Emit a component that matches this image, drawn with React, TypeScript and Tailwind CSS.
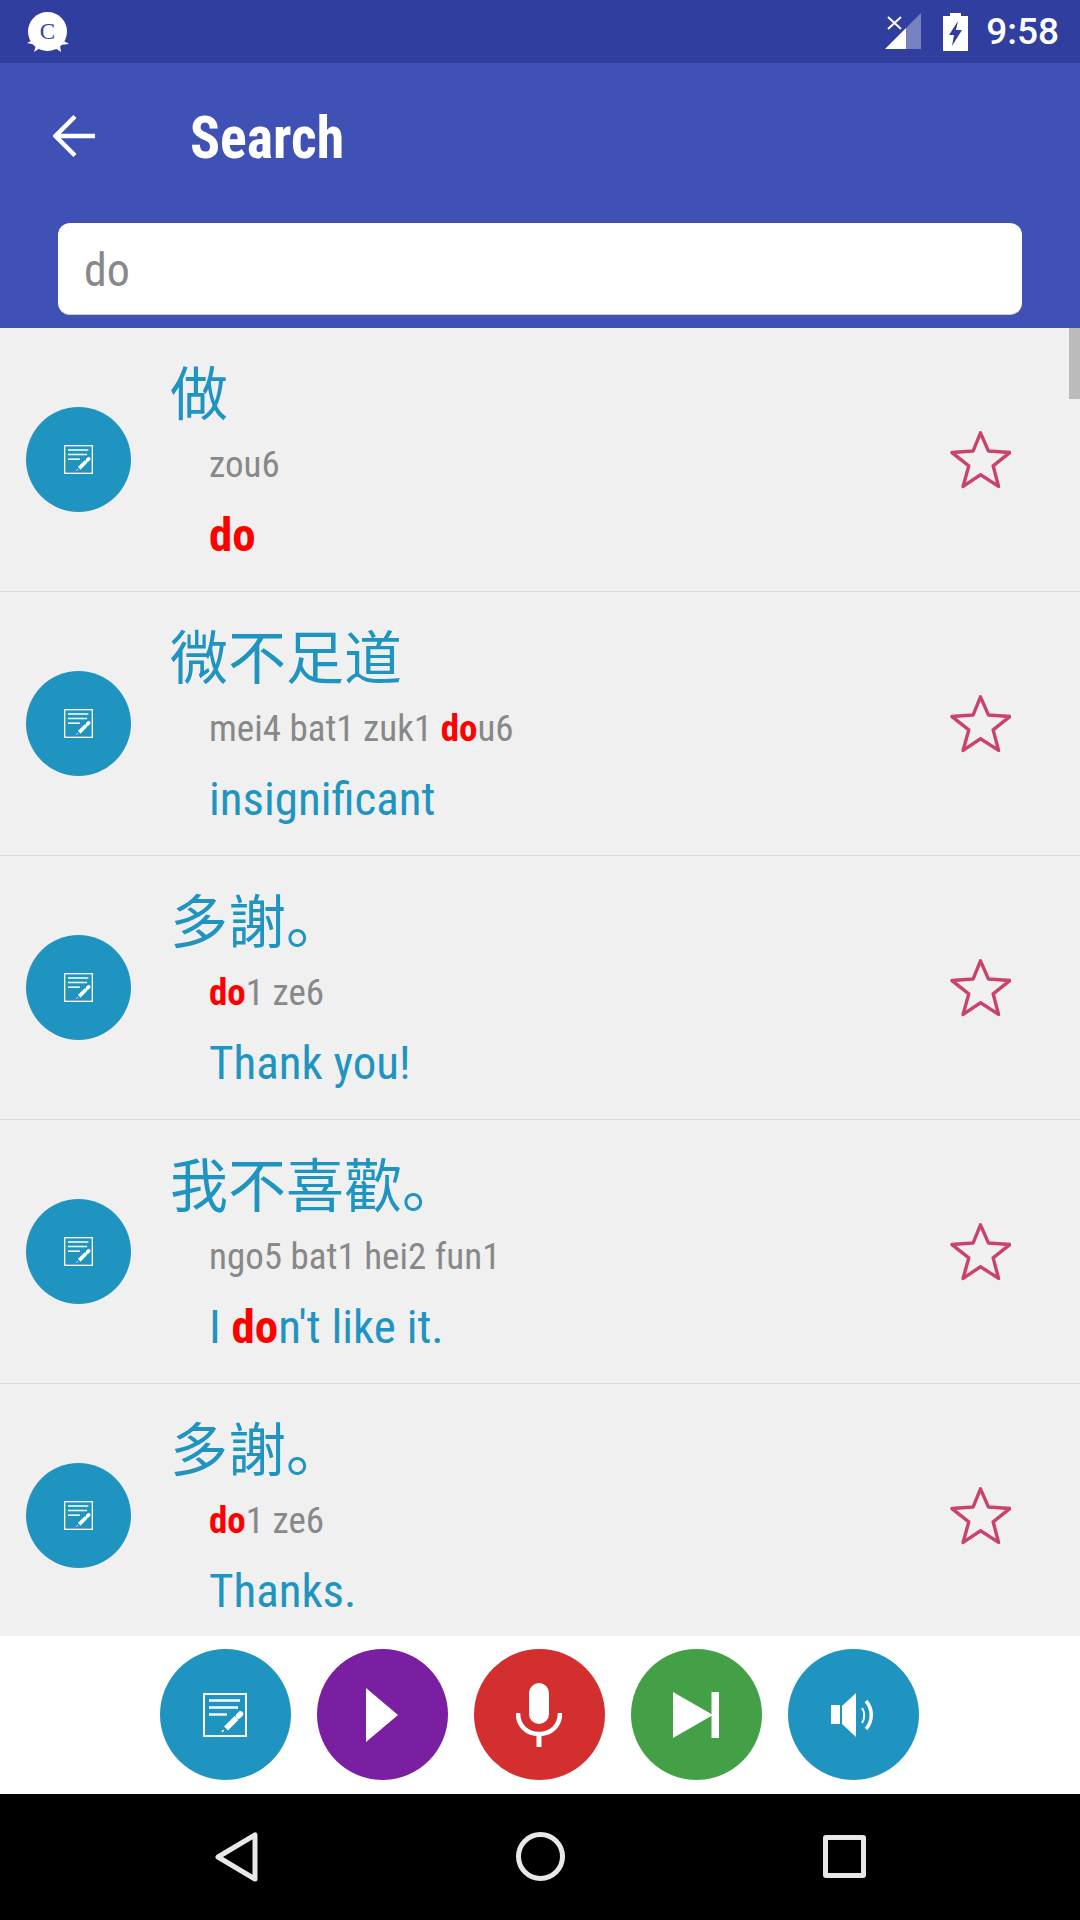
import React from "react";

const NoteIcon = ({ size }: { size: number }) => (
  <svg width={size} height={size} viewBox="0 0 44 44" fill="none">
    <rect x="1" y="1" width="42" height="42" stroke="#fff" strokeWidth="2" />
    <path d="M6 7.5H37M6 14.5H35" stroke="#fff" strokeWidth="2.4" />
    <path d="M6 21.5H24" stroke="#fff" strokeWidth="2.4" />
    <path d="M23 35.5L33.5 25" stroke="#fff" strokeWidth="5.5" />
    <path d="M35.5 23L37.5 21" stroke="#fff" strokeWidth="5.5" strokeLinecap="round" />
    <path d="M19 39L20.5 37" stroke="#fff" strokeWidth="1.4" />
  </svg>
);

const Star = () => (
  <svg width="61" height="59" viewBox="0 0 64 62" fill="none">
    <path
      d="M32 3L40.3 22L62.7 23.7L45.3 37.7L51 59.3L32 47L13.7 59.3L19.7 37.7L2 23.7L24.3 22Z"
      stroke="#c9446c"
      strokeWidth="3.6"
      strokeLinejoin="round"
    />
  </svg>
);

const R = ({ children }: { children: React.ReactNode }) => (
  <span className="font-bold text-[#ff0000]">{children}</span>
);

const rows: { zh: string; py: React.ReactNode; en: React.ReactNode }[] = [
  { zh: "做", py: "zou6", en: <R>do</R> },
  { zh: "微不足道", py: <>mei4 bat1 zuk1 <R>do</R>u6</>, en: "insignificant" },
  { zh: "多謝。", py: <><R>do</R>1 ze6</>, en: "Thank you!" },
  { zh: "我不喜歡。", py: "ngo5 bat1 hei2 fun1", en: <>I <R>do</R>n't like it.</> },
  { zh: "多謝。", py: <><R>do</R>1 ze6</>, en: "Thanks." },
];

const Row = ({ zh, py, en }: (typeof rows)[number]) => (
  <div className="flex h-[264px] shrink-0 items-center border-b border-[#d8d8d8] pl-[26px] pr-[69px]">
    <div className="flex h-[105px] w-[105px] shrink-0 items-center justify-center rounded-full bg-[#2094c0]">
      <NoteIcon size={29} />
    </div>
    <div className="ml-[39px] flex h-full min-w-0 flex-1 flex-col">
      <div className="mt-[27px] h-[70px] text-[58px] leading-[70px] text-[#2094c0] [font-family:'Noto_Sans_CJK_SC',sans-serif]">
        {zh}
      </div>
      <div className="ml-[39px] mt-[18px] h-[44px] text-[37px] font-[450] leading-[44px] text-[#888888] [font-stretch:75%]">
        {py}
      </div>
      <div className="ml-[39px] mt-[20px] h-[56px] text-[47px] font-[450] leading-[56px] text-[#2094c0] [font-stretch:75%]">
        {en}
      </div>
    </div>
    <Star />
  </div>
);

export default function App() {
  return (
    <div className="flex h-[1920px] w-[1080px] flex-col overflow-hidden bg-white [font-family:Roboto,sans-serif]">
      <div className="flex h-[63px] shrink-0 items-center justify-between bg-[#303f9f] pl-[27px] pr-[21px]">
        <svg width="42" height="40" viewBox="0 0 42 40">
          <circle cx="20.5" cy="19.5" r="19.5" fill="#fff" />
          <path d="M0 31L9 33L7 40L13 36H28L34 40L33 33L42 32L32 26H10Z" fill="#fff" />
          <text x="20.5" y="27" textAnchor="middle" fontSize="23" fill="#303f9f" fontFamily="Liberation Serif, serif">C</text>
        </svg>
        <div className="flex items-center">
          <svg width="36" height="37" viewBox="0 0 36 37">
            <path d="M36 0V36H21V15Z" fill="#fff" fillOpacity=".35" />
            <path d="M21 15V36H0Z" fill="#fff" />
            <path d="M3 4L16 16M16 4L3 16" stroke="#fff" strokeWidth="2" />
          </svg>
          <svg className="ml-[22px]" width="25" height="38" viewBox="0 0 25 38">
            <path d="M7 0H18V3H25V38H0V3H7Z" fill="#fff" />
            <path d="M15 8L6 22H11L9 33L19 17H13Z" fill="#303f9f" />
          </svg>
          <span className="ml-[18px] text-[37px] font-medium leading-[42px] text-white">9:58</span>
        </div>
      </div>

      <div className="flex h-[265px] shrink-0 flex-col bg-[#3f51b5]">
        <div className="flex h-[146px] items-center pl-[53px]">
          <svg width="42" height="42" viewBox="0 0 42 42" fill="none">
            <path d="M42 21H4M22 1.5L2.5 21L22 40.5" stroke="#fff" strokeWidth="4.5" />
          </svg>
          <span className="ml-[95px] mt-[4px] origin-left scale-x-[0.93] text-[60px] font-bold leading-[64px] text-white [font-stretch:75%]">Search</span>
        </div>
        <div className="mx-[58px] mt-[14px] flex h-[92px] items-center rounded-[12px] border-b border-[#cccccc] bg-white pl-[26px] pt-[4px] text-[46px] font-[450] text-[#888888] [font-stretch:75%]">
          do
        </div>
      </div>

      <div className="relative flex h-[1308px] shrink-0 flex-col overflow-hidden bg-[#f0f0f0]">
        {rows.map((r, i) => (
          <Row key={i} {...r} />
        ))}
        <div className="absolute right-0 top-0 h-[71px] w-[11px] bg-[#bbbbbb]" />
      </div>

      <div className="flex h-[158px] shrink-0 items-center justify-center gap-[26px] bg-white pb-[1px] pr-[2px]">
        <div className="flex h-[131px] w-[131px] items-center justify-center rounded-full bg-[#2094c0]">
          <NoteIcon size={44} />
        </div>
        <div className="flex h-[131px] w-[131px] items-center justify-center rounded-full bg-[#7b1fa2]">
          <svg width="32" height="54" viewBox="0 0 32 54">
            <path d="M0 0L32 27L0 54Z" fill="#fff" />
          </svg>
        </div>
        <div className="flex h-[131px] w-[131px] items-center justify-center rounded-full bg-[#d32f2f]">
          <svg width="46" height="64" viewBox="0 0 46 64" fill="none">
            <rect x="13" y="0" width="20" height="41" rx="10" fill="#fff" />
            <path d="M2 30C2 43 11 51 23 51S44 43 44 30" stroke="#fff" strokeWidth="4.5" />
            <path d="M23 50V64" stroke="#fff" strokeWidth="5" />
          </svg>
        </div>
        <div className="flex h-[131px] w-[131px] items-center justify-center rounded-full bg-[#43a047]">
          <svg width="46" height="46" viewBox="0 0 46 46">
            <path d="M0 0L40 23L0 46Z" fill="#fff" />
            <rect x="38.5" y="0" width="7.5" height="46" fill="#fff" />
          </svg>
        </div>
        <div className="flex h-[131px] w-[131px] items-center justify-center rounded-full bg-[#2094c0]">
          <svg width="44" height="44" viewBox="0 0 44 44" fill="none">
            <rect x="0" y="12" width="9" height="19" fill="#fff" />
            <path d="M11 13L25 0V44L11 31Z" fill="#fff" />
            <path d="M31 15C34 19 34 26 31 30" stroke="#fff" strokeWidth="2" />
            <path d="M35 8C42 16 42 28 35 36" stroke="#fff" strokeWidth="3.5" />
          </svg>
        </div>
      </div>

      <div className="relative flex flex-1 bg-black">
        <svg className="absolute left-[215px] top-[38px]" width="43" height="50" viewBox="0 0 43 50" fill="none">
          <path d="M40 3V47L3 25Z" stroke="#e8e8e8" strokeWidth="5" strokeLinejoin="round" />
        </svg>
        <div className="absolute left-[516px] top-[38px] h-[49px] w-[49px] rounded-full border-[5px] border-[#e8e8e8]" />
        <div className="absolute left-[823px] top-[41px] h-[43px] w-[43px] rounded-[3px] border-[5px] border-[#e8e8e8]" />
      </div>
    </div>
  );
}
